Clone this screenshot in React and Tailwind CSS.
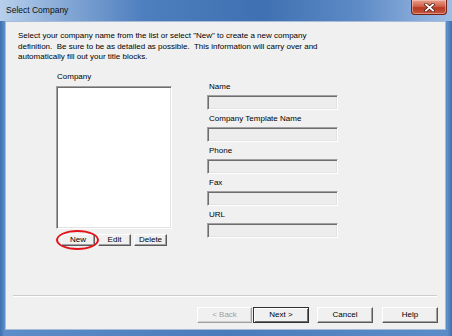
import React from "react";

function Field({ label }) {
    return (
        <div className="flex flex-col mb-[4px]">
            <span className="pl-[2px] leading-[10.5px]">{label}</span>
            <div className="mt-[2.5px] w-[131px] h-[15px] bg-[#ededed] border border-t-[#a0a0a0] border-l-[#a0a0a0] border-r-white border-b-white shadow-[inset_1px_1px_0_#6d6d6d,inset_-1px_-1px_0_#e3e3e3]" />
        </div>
    );
}

function SmallButton({ children, className = "" }) {
    return (
        <button
            type="button"
            className={`h-[12px] flex items-center justify-center bg-[#f0f0f0] border border-t-white border-l-white border-r-[#5a5a5a] border-b-[#5a5a5a] shadow-[inset_-1px_-1px_0_#a0a0a0] leading-none ${className}`}
        >
            {children}
        </button>
    );
}

function WizardButton({ children, className = "", disabled, isDefault }) {
    return (
        <button
            type="button"
            className={`h-[16px] flex items-center justify-center bg-[#f0f0f0] border leading-none ${disabled
                ? "text-[#a0a0a0] border-t-white border-l-white border-r-[#a0a0a0] border-b-[#a0a0a0] shadow-[inset_-1px_-1px_0_#d0d0d0]"
                : isDefault
                    ? "border-[#303030] shadow-[inset_1px_1px_0_#fff,inset_-1px_-1px_0_#6d6d6d]"
                    : "border-t-white border-l-white border-r-[#5a5a5a] border-b-[#5a5a5a] shadow-[inset_-1px_-1px_0_#a0a0a0]"
                } ${className}`}
        >
            {children}
        </button>
    );
}

export default function App() {
    return (
        <div className="w-[452px] h-[336px] flex flex-col bg-[#4a7bbb] font-['Liberation_Sans',Arial,sans-serif] text-[8px] text-black">
            {/* title bar */}
            <div className="h-[21px] flex items-start bg-[linear-gradient(90deg,#b7cfec_0%,#86a9d6_14%,#4d7ebe_32%,#3f70b1_58%,#5f8cc7_80%,#9fbde4_100%)]">
                <span className="pl-[6px] pt-[5px] text-[8.5px] leading-[10px] text-[#101010]">Select Company</span>
                <div className="ml-auto mr-[5px] w-[36px] h-[15px] rounded-b-[4px] border border-t-0 border-[#6e2418] bg-[linear-gradient(180deg,#e7a08f_0%,#d1614a_45%,#b63a24_55%,#c8543b_100%)] flex items-center justify-center shadow-[inset_0_0_0_1px_rgba(255,220,210,0.45)]">
                    <svg width="11" height="9" viewBox="0 0 11 9">
                        <path d="M2 1.5 L9 7.5 M9 1.5 L2 7.5" stroke="#5a1d14" strokeWidth="3.4" strokeLinecap="square" />
                        <path d="M2 1.5 L9 7.5 M9 1.5 L2 7.5" stroke="#ffffff" strokeWidth="1.8" strokeLinecap="square" />
                    </svg>
                </div>
            </div>

            {/* frame + client */}
            <div className="flex-1 flex pl-[5px] pr-[6px] pb-[6px] bg-[linear-gradient(90deg,#3e6fae_0%,#5d8dc8_1%,#4a7bbb_50%,#5d8dc8_99%,#3e6fae_100%)]">
                <div className="flex-1 flex flex-col bg-[#f0f0f0] border border-[#a7bcd8]">
                    <p className="pl-[12px] pt-[9px] leading-[10.5px]">
                        Select your company name from the list or select "New" to create a new company
                        <br />
                        definition.&nbsp; Be sure to be as detailed as possible.&nbsp; This information will carry over and
                        <br />
                        automatically fill out your title blocks.
                    </p>

                    <div className="flex mt-[9.5px]">
                        {/* company list */}
                        <div className="ml-[50px] flex flex-col">
                            <span className="pl-[1px] leading-[10.5px]">Company</span>
                            <div className="mt-[3px] w-[116px] h-[143px] bg-white border border-t-[#a0a0a0] border-l-[#a0a0a0] border-r-white border-b-white shadow-[inset_1px_1px_0_#6d6d6d,inset_-1px_-1px_0_#e3e3e3]" />
                            <div className="mt-[5px] ml-[5px] flex gap-[3px]">
                                <div className="relative">
                                    <SmallButton className="w-[34px]">New</SmallButton>
                                    <div className="absolute -left-[5px] -top-[4px] w-[43px] h-[20px] rounded-[50%] border-[2.5px] border-[#e3131c]" />
                                </div>
                                <SmallButton className="w-[33px]">Edit</SmallButton>
                                <SmallButton className="w-[33px]">Delete</SmallButton>
                            </div>
                        </div>

                        {/* details */}
                        <div className="ml-[35px] pt-[9.5px] flex flex-col">
                            <Field label="Name" />
                            <Field label="Company Template Name" />
                            <Field label="Phone" />
                            <Field label="Fax" />
                            <Field label="URL" />
                        </div>
                    </div>

                    <div className="mt-[49px] ml-[7px] mr-[8px] h-[2px] bg-[#cdcdcd] border-b border-white" />

                    <div className="mt-[10px] mr-[7px] flex justify-end">
                        <WizardButton className="w-[55px]" disabled>&lt; Back</WizardButton>
                        <WizardButton className="w-[56px] ml-[1px]" isDefault>Next &gt;</WizardButton>
                        <WizardButton className="w-[56px] ml-[8px]">Cancel</WizardButton>
                        <WizardButton className="w-[56px] ml-[9px]">Help</WizardButton>
                    </div>
                </div>
            </div>
        </div>
    );
}
